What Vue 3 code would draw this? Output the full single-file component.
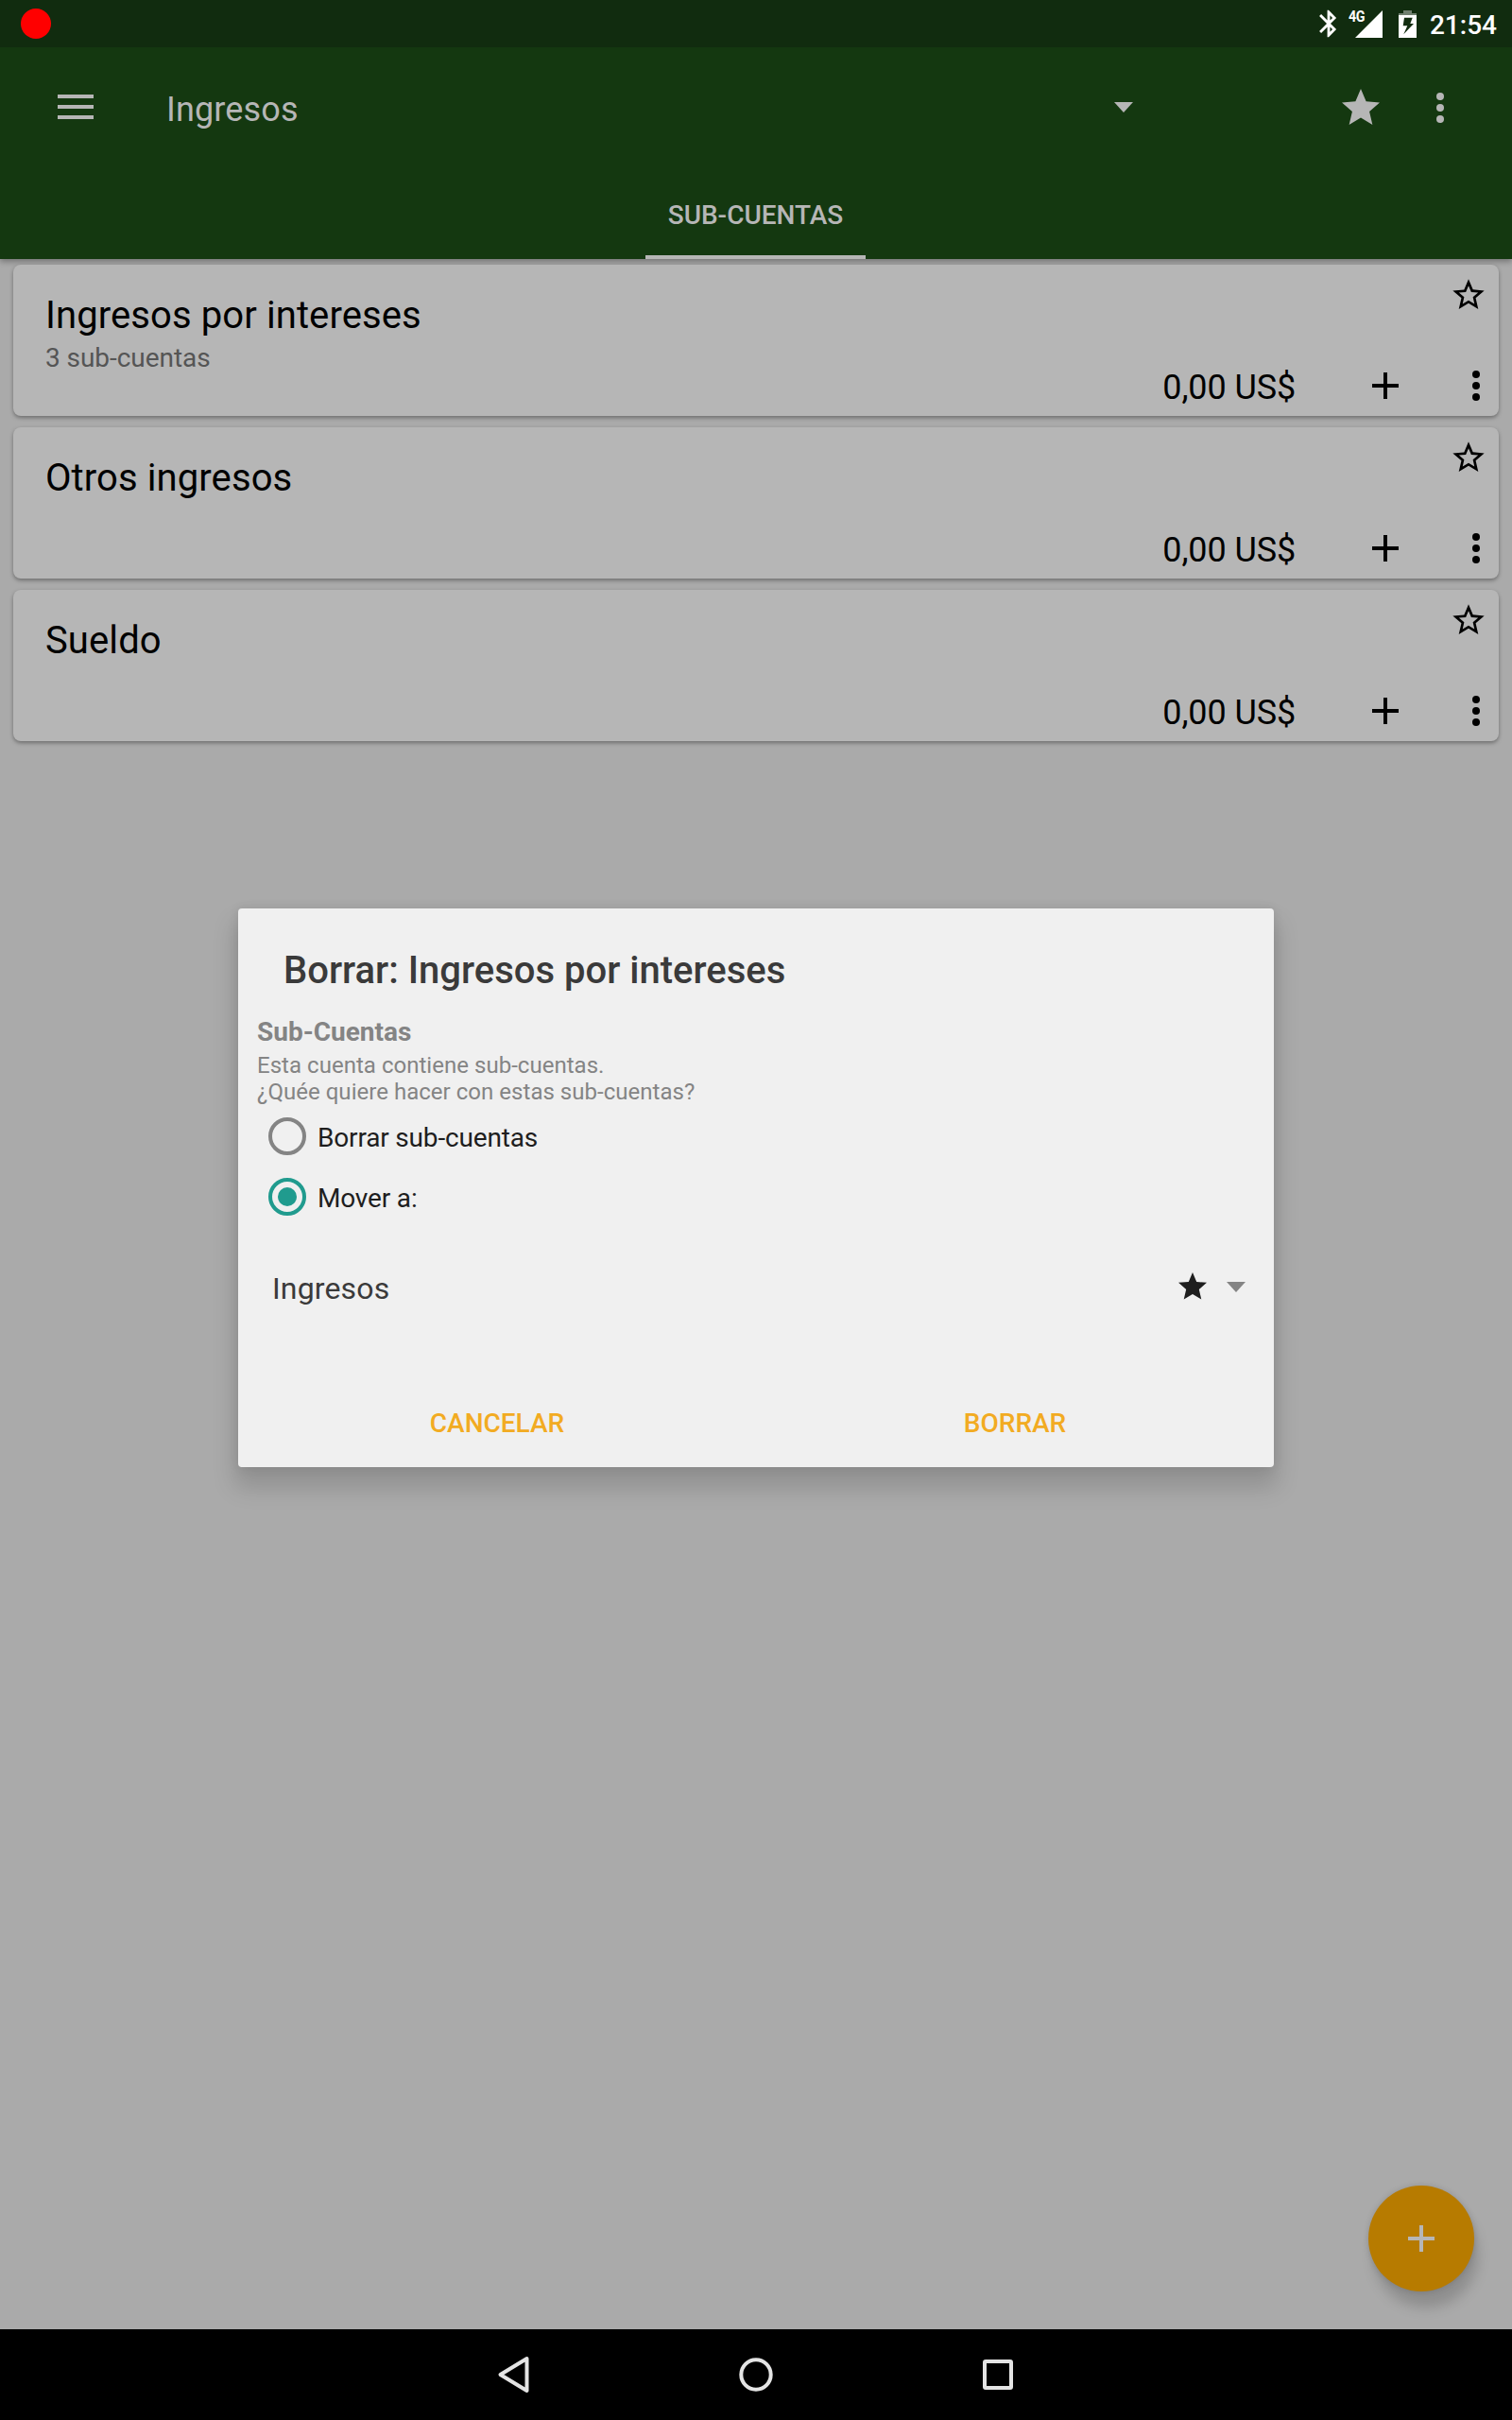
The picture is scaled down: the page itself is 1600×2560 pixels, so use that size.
<script setup>
const accounts = [
  { name: 'Ingresos por intereses', detail: '3 sub-cuentas', balance: '0,00 US$' },
  { name: 'Otros ingresos', detail: '', balance: '0,00 US$' },
  { name: 'Sueldo', detail: '', balance: '0,00 US$' },
]
const options = [
  { label: 'Borrar sub-cuentas', checked: false },
  { label: 'Mover a:', checked: true },
]
</script>

<template>
  <div class="screen">
    <header class="header">
      <div class="status">
        <span class="record"></span>
        <div class="status-icons">
          <svg class="bluetooth" width="34" height="34" viewBox="0 0 24 24">
            <path d="M17.71 7.71L12 2h-1v7.59L6.41 5 5 6.41 10.59 12 5 17.59 6.41 19 11 14.41V22h1l5.71-5.71-4.3-4.29 4.3-4.29zM13 5.83l1.88 1.88L13 9.59V5.83zm1.88 10.46L13 18.17v-3.76l1.88 1.88z" />
          </svg>
          <div class="signal">
            <svg width="29" height="29" viewBox="0 0 29 29"><path d="M29 0V29H0z" /></svg>
            <span class="network">4G</span>
          </div>
          <svg class="battery" width="19" height="29" viewBox="0 0 19 29">
            <path fill-opacity=".4" d="M5 0h9v3h5v2H0V3h5z" />
            <path fill-rule="evenodd" d="M0 5h19v24H0zM6 7.7l-1.3 8.6h4.6l-4 9L16 14h-3.7l2.4-6.3z" />
          </svg>
          <span class="clock">21:54</span>
        </div>
      </div>
      <div class="toolbar">
        <svg class="menu" width="38" height="26" viewBox="0 0 38 26"><path d="M0 0h38v4H0zM0 11h38v4H0zM0 22h38v4H0z" /></svg>
        <div class="picker">
          <span class="picker-text">Ingresos</span>
          <svg class="picker-arrow" width="20" height="11" viewBox="0 0 20 11"><path d="M0 0h20L10 11z" /></svg>
        </div>
        <svg class="fav" width="48" height="48" viewBox="0 0 24 24"><path d="M12 17.27L18.18 21l-1.64-7.03L22 9.24l-7.19-.61L12 2 9.19 8.63 2 9.24l5.46 4.73L5.82 21z" /></svg>
        <svg class="overflow" width="48" height="48" viewBox="0 0 24 24"><circle cx="12" cy="6" r="2" /><circle cx="12" cy="12" r="2" /><circle cx="12" cy="18" r="2" /></svg>
      </div>
      <nav class="tabs"><span class="tab">SUB-CUENTAS</span></nav>
    </header>

    <main class="list">
      <article v-for="a in accounts" :key="a.name" class="card">
        <div class="card-main">
          <div class="name">{{ a.name }}</div>
          <div v-if="a.detail" class="detail">{{ a.detail }}</div>
        </div>
        <div class="card-side">
          <svg class="card-star" width="40" height="40" viewBox="0 0 24 24"><path d="M22 9.24l-7.19-.62L12 2 9.19 8.63 2 9.24l5.46 4.73L5.82 21 12 17.27 18.18 21l-1.63-7.03L22 9.24zM12 15.4l-3.76 2.27 1-4.28-3.32-2.88 4.38-.38L12 6.1l1.71 4.04 4.38.38-3.32 2.88 1 4.28L12 15.4z" /></svg>
          <div class="actions">
            <span class="balance">{{ a.balance }}</span>
            <svg width="48" height="48" viewBox="0 0 24 24"><path d="M19 13h-6v6h-2v-6H5v-2h6V5h2v6h6z" /></svg>
            <svg width="48" height="48" viewBox="0 0 24 24"><circle cx="12" cy="6" r="2" /><circle cx="12" cy="12" r="2" /><circle cx="12" cy="18" r="2" /></svg>
          </div>
        </div>
      </article>
    </main>

    <button class="fab">
      <svg width="48" height="48" viewBox="0 0 24 24"><path d="M19 13h-6v6h-2v-6H5v-2h6V5h2v6h6z" /></svg>
    </button>

    <footer class="navbar">
      <svg width="48" height="48" viewBox="0 0 48 48"><path d="M37.5 7L9.5 24l28 17z" /></svg>
      <svg width="48" height="48" viewBox="0 0 48 48"><circle cx="24" cy="24" r="15.7" /></svg>
      <svg width="48" height="48" viewBox="0 0 48 48"><rect x="10" y="10" width="28" height="28" rx="1" /></svg>
    </footer>

    <div class="overlay">
      <section class="dialog">
        <h2 class="dialog-title">Borrar: Ingresos por intereses</h2>
        <h3 class="section-title">Sub-Cuentas</h3>
        <p class="message">Esta cuenta contiene sub-cuentas.<br />¿Quée quiere hacer con estas sub-cuentas?</p>
        <label v-for="o in options" :key="o.label" class="option">
          <span class="radio" :class="{ checked: o.checked }"></span>
          <span class="option-label">{{ o.label }}</span>
        </label>
        <div class="target">
          <span class="target-name">Ingresos</span>
          <svg class="target-star" width="36" height="36" viewBox="0 0 24 24"><path d="M12 17.27L18.18 21l-1.64-7.03L22 9.24l-7.19-.61L12 2 9.19 8.63 2 9.24l5.46 4.73L5.82 21z" /></svg>
          <svg class="target-arrow" width="20" height="11" viewBox="0 0 20 11"><path d="M0 0h20L10 11z" /></svg>
        </div>
        <div class="buttons">
          <span>CANCELAR</span>
          <span>BORRAR</span>
        </div>
      </section>
    </div>
  </div>
</template>

<style>
body {
  margin: 0;
}
</style>

<style scoped>
.screen {
  position: relative;
  display: flex;
  flex-direction: column;
  width: 1600px;
  height: 2560px;
  overflow: hidden;
  background: #aaaaaa;
  font-family: Roboto, sans-serif;
  color: #000;
}
svg {
  display: block;
  flex: none;
}

.header {
  flex: none;
  background: #143810;
  color: #b6b6b6;
  fill: #b6b6b6;
  box-shadow: 0 3px 6px rgba(0, 0, 0, 0.3);
}
.status {
  display: flex;
  justify-content: space-between;
  align-items: center;
  height: 50px;
  padding: 0 16px 0 22px;
  background: #112c0f;
  color: #fff;
  fill: #fff;
}
.record {
  width: 32px;
  height: 32px;
  border-radius: 50%;
  background: #f00;
}
.status-icons {
  display: flex;
  align-items: center;
}
.bluetooth {
  margin-right: 11px;
}
.signal {
  position: relative;
  margin-right: 17px;
  padding-top: 1px;
}
.network {
  position: absolute;
  left: -7px;
  top: -3px;
  font-size: 17px;
  line-height: 20px;
  font-weight: 700;
  letter-spacing: -0.6px;
  transform: scaleX(0.84);
  transform-origin: left;
}
.battery {
  margin-right: 14px;
}
.clock {
  padding-top: 4px;
  font-size: 28px;
  line-height: 32px;
  font-weight: 500;
}
.toolbar {
  display: flex;
  align-items: center;
  height: 128px;
  padding: 0 52px 0 61px;
}
.menu {
  margin-top: -2px;
}
.picker {
  display: flex;
  align-items: center;
  justify-content: space-between;
  width: 1023px;
  margin-left: 77px;
}
.picker-text {
  padding-top: 3px;
  font-size: 36px;
  line-height: 44px;
  letter-spacing: 0.15px;
}
.picker-arrow {
  margin-top: -1px;
}
.fav {
  margin-left: auto;
  margin-right: 36px;
}
.tabs {
  display: flex;
  justify-content: center;
  height: 96px;
}
.tab {
  box-sizing: border-box;
  width: 233px;
  height: 96px;
  margin-right: 1px;
  padding-top: 2px;
  border-bottom: 4px solid #b6b6b6;
  font-size: 28px;
  line-height: 96px;
  font-weight: 500;
  text-align: center;
}

.list {
  display: flex;
  flex: 1;
  flex-direction: column;
  gap: 12px;
  padding: 6px 14px 0;
}
.card {
  display: flex;
  justify-content: space-between;
  height: 160px;
  border-radius: 8px;
  background: #b6b6b6;
  box-shadow: 0 2px 4px rgba(0, 0, 0, 0.36);
}
.card-main {
  padding: 30px 0 0 34px;
}
.name {
  font-size: 40px;
  line-height: 48px;
  letter-spacing: 0.1px;
}
.detail {
  margin-top: 5px;
  font-size: 28px;
  line-height: 32px;
  letter-spacing: -0.05px;
  color: #555;
}
.card-side {
  display: flex;
  flex-direction: column;
  justify-content: space-between;
  align-items: flex-end;
  padding: 12px 0 8px;
}
.card-star {
  margin-right: 12px;
}
.actions {
  display: flex;
  align-items: center;
  gap: 48px;
}
.balance {
  margin-right: 23px;
  padding-top: 5px;
  font-size: 36px;
  line-height: 44px;
  letter-spacing: -0.12px;
}

.fab {
  position: absolute;
  left: 1448px;
  top: 2312px;
  display: flex;
  align-items: center;
  justify-content: center;
  width: 112px;
  height: 112px;
  padding: 0;
  border: 0;
  border-radius: 50%;
  background: #b77b00;
  fill: #b6b6b6;
  box-shadow: 5px 18px 14px -1px rgba(0, 0, 0, 0.17), 0 0 6px rgba(0, 0, 0, 0.15);
}

.navbar {
  display: flex;
  align-items: center;
  justify-content: center;
  gap: 208px;
  height: 96px;
  background: #000;
  fill: none;
  stroke: #e4e4e4;
  stroke-width: 4;
  stroke-linejoin: round;
}

.overlay {
  position: absolute;
  inset: 0;
  display: flex;
  justify-content: center;
  align-items: flex-start;
  padding-top: 961px;
}
.dialog {
  box-sizing: border-box;
  width: 1096px;
  height: 591px;
  padding-top: 42px;
  border-radius: 4px;
  background: #f0f0f0;
  box-shadow: 0 18px 24px 4px rgba(0, 0, 0, 0.15), 0 0 12px rgba(0, 0, 0, 0.09);
}
.dialog-title {
  margin: 0 0 25px;
  padding-left: 48px;
  font-size: 40px;
  line-height: 48px;
  font-weight: 500;
  color: #3a3a3a;
}
.section-title {
  margin: 0 0 5px;
  padding-left: 20px;
  font-size: 28px;
  line-height: 32px;
  font-weight: 700;
  color: #848484;
}
.message {
  margin: 0 0 1px;
  padding-left: 20px;
  font-size: 24px;
  line-height: 28px;
  letter-spacing: 0.03px;
  color: #848484;
}
.option {
  display: flex;
  align-items: center;
  height: 64px;
  padding-left: 32px;
}
.radio {
  box-sizing: border-box;
  width: 40px;
  height: 40px;
  padding: 6px;
  border: 4px solid #848484;
  border-radius: 50%;
}
.radio.checked {
  border-color: #209b8e;
}
.radio.checked::before {
  content: '';
  display: block;
  width: 20px;
  height: 20px;
  border-radius: 50%;
  background: #209b8e;
}
.option-label {
  padding: 3px 0 0 12px;
  font-size: 28px;
  line-height: 32px;
  letter-spacing: -0.17px;
  color: #1e1e1e;
}
.target {
  display: flex;
  align-items: center;
  height: 126px;
  padding: 0 30px 0 36px;
}
.target-name {
  flex: 1;
  padding-top: 4px;
  font-size: 32px;
  line-height: 40px;
  letter-spacing: 0.15px;
  color: #3a3a3a;
}
.target-star {
  margin-right: 18px;
  fill: #1e1e1e;
}
.target-arrow {
  fill: #848484;
}
.buttons {
  display: flex;
  height: 96px;
  margin-top: 32px;
  align-items: center;
}
.buttons span {
  flex: 1;
  padding-top: 3px;
  font-size: 28px;
  line-height: 32px;
  font-weight: 500;
  text-align: center;
  color: #f2ab22;
}
</style>
